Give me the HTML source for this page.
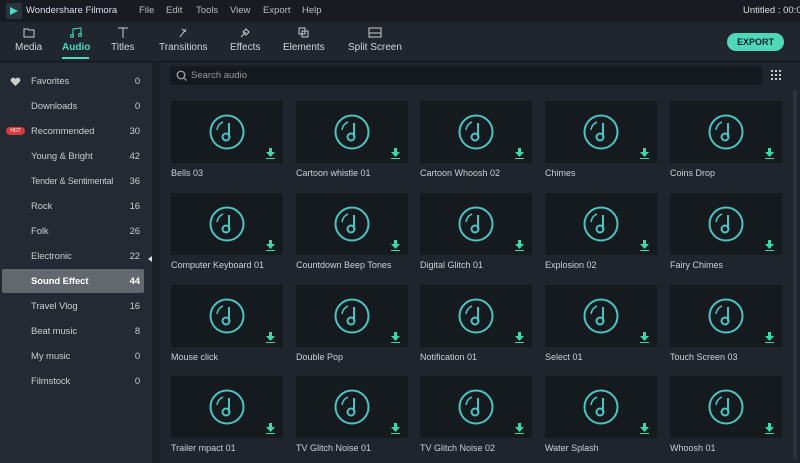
<html><head><style>
*{margin:0;padding:0;box-sizing:border-box}
body{width:800px;height:463px;overflow:hidden;background:#1c222b;font-family:"Liberation Sans",sans-serif;font-size:9.5px;color:#c8ccd0;position:relative}
.ab{position:absolute;white-space:nowrap}
#title{left:0;top:0;width:800px;height:22px;background:#181c22}
#tool{left:0;top:22px;width:800px;height:40px;background:#20262e;border-bottom:1px solid #14181d}
.tb{position:absolute;top:27px;text-align:center;font-size:10px;color:#d0d4d8;white-space:nowrap}
.tb svg{display:block;margin:0 auto 4px}
#side{left:0;top:63px;width:152px;height:400px;background:#232a33}
.it{position:absolute;left:0;width:152px;height:25px;line-height:25px;font-size:9.5px;letter-spacing:-0.1px}
.it .n{position:absolute;left:31px}
.it .c{position:absolute;right:12px}
#main{left:160px;top:63px;width:640px;height:400px;background:#1e252d}
.card{position:absolute;width:112px}
.th{width:112px;height:62px;background:#151a1f;position:relative}
.lb{margin-top:5px;font-size:9px;color:#ccd0d4;white-space:nowrap}
</style></head><body>
<div id="title" class="ab">
<svg class="ab" style="left:6px;top:3px" width="16" height="16"><rect width="16" height="16" rx="2" fill="#2a323c"/><path d="M4 4l8 4-8 4z" fill="#4fd8c0"/></svg>
<span class="ab" style="left:26px;top:5px;color:#dde">Wondershare Filmora</span>
<span class="ab" style="left:139px;top:5px;color:#bbb">File</span>
<span class="ab" style="left:166px;top:5px;color:#bbb">Edit</span>
<span class="ab" style="left:196px;top:5px;color:#bbb">Tools</span>
<span class="ab" style="left:230px;top:5px;color:#bbb">View</span>
<span class="ab" style="left:263px;top:5px;color:#bbb">Export</span>
<span class="ab" style="left:302px;top:5px;color:#bbb">Help</span>
<span class="ab" style="left:743px;top:5px;color:#ddd">Untitled : 00:0</span>
</div>
<div id="tool" class="ab"></div>
<div class="tb" style="left:15px"><svg width="12" height="11"><path d="M1 2h4l1 1h5v7H1z" fill="none" stroke="#ccc"/></svg>Media</div>
<div class="tb" style="left:62px;color:#4fd8c0;font-weight:bold"><svg width="14" height="11"><path d="M4 9V2l8-1v7" fill="none" stroke="#4fd8c0"/><circle cx="3" cy="9" r="1.5" fill="none" stroke="#4fd8c0"/><circle cx="11" cy="8" r="1.5" fill="none" stroke="#4fd8c0"/></svg>Audio</div>
<div class="ab" style="left:62px;top:57px;width:27px;height:2px;background:#4fd8c0"></div>
<div class="tb" style="left:111px"><svg width="12" height="11"><path d="M1 1h10M6 1v10" stroke="#ccc" fill="none"/></svg>Titles</div>
<div class="tb" style="left:159px"><svg width="12" height="11"><path d="M3 10l6-8M5 2l4 3" stroke="#ccc" fill="none"/></svg>Transitions</div>
<div class="tb" style="left:230px"><svg width="12" height="11"><path d="M2 10l5-5M7 2l3 3-3 3-3-3z" stroke="#ccc" fill="none"/></svg>Effects</div>
<div class="tb" style="left:283px"><svg width="12" height="11"><rect x="1" y="1" width="6" height="6" fill="none" stroke="#ccc"/><rect x="4" y="4" width="6" height="6" fill="none" stroke="#ccc"/></svg>Elements</div>
<div class="tb" style="left:348px"><svg width="14" height="11"><rect x="1" y="1" width="12" height="9" fill="none" stroke="#ccc"/><path d="M1 6h12" stroke="#ccc"/></svg>Split Screen</div>
<div class="ab" style="left:727px;top:33px;width:57px;height:18px;border-radius:9px;background:#4fd8b8;color:#123;font-weight:bold;font-size:9px;text-align:center;line-height:18px">EXPORT</div>
<div id="side" class="ab">
<div class="it" style="top:6px"><svg class="ab" style="left:10px;top:8px" width="11" height="10"><path d="M5.5 9L1 4.5A2.3 2.3 0 0 1 5.5 2 2.3 2.3 0 0 1 10 4.5z" fill="#ccc"/></svg><span class="n">Favorites</span><span class="c">0</span></div>
<div class="it" style="top:31px"><span class="n">Downloads</span><span class="c">0</span></div>
<div class="it" style="top:56px"><span class="ab" style="left:6px;top:8px;width:19px;height:8px;border-radius:4px;background:#d23c3c;font-size:5px;line-height:8px;text-align:center;color:#fff">HOT</span><span class="n">Recommended</span><span class="c">30</span></div>
<div class="it" style="top:81px"><span class="n">Young &amp; Bright</span><span class="c">42</span></div>
<div class="it" style="top:106px"><span class="n" style="font-size:9px;letter-spacing:-0.2px">Tender &amp; Sentimental</span><span class="c">36</span></div>
<div class="it" style="top:131px"><span class="n">Rock</span><span class="c">16</span></div>
<div class="it" style="top:156px"><span class="n">Folk</span><span class="c">26</span></div>
<div class="it" style="top:181px"><span class="n">Electronic</span><span class="c">22</span></div>
<div class="ab" style="left:2px;top:206px;width:142px;height:24px;border-radius:2px;background:#62686e"></div>
<div class="it" style="top:206px;color:#fff;font-weight:bold"><span class="n">Sound Effect</span><span class="c">44</span></div>
<div class="it" style="top:231px"><span class="n">Travel Vlog</span><span class="c">16</span></div>
<div class="it" style="top:256px"><span class="n">Beat music</span><span class="c">8</span></div>
<div class="it" style="top:281px"><span class="n">My music</span><span class="c">0</span></div>
<div class="it" style="top:306px"><span class="n">Filmstock</span><span class="c">0</span></div>
</div>
<div class="ab" style="left:152px;top:63px;width:8px;height:400px;background:#1a1f26"></div>
<div class="ab" style="left:148px;top:256px;width:0;height:0;border-top:3px solid transparent;border-bottom:3px solid transparent;border-right:4px solid #ddd"></div>
<div id="main" class="ab"></div>
<div class="ab" style="left:170px;top:66px;width:592px;height:19px;background:#151a20;border-radius:3px"></div>
<svg class="ab" style="left:176px;top:70px" width="11" height="11"><circle cx="5" cy="5" r="3.8" fill="none" stroke="#aaa" stroke-width="1.2"/><path d="M8 8l2.5 2.5" stroke="#aaa" stroke-width="1.2"/></svg>
<span class="ab" style="left:191px;top:70px;color:#999">Search audio</span>
<svg class="ab" style="left:771px;top:70px" width="10" height="10" fill="#ccc"><rect x="0" y="0" width="2" height="2"/><rect x="4" y="0" width="2" height="2"/><rect x="8" y="0" width="2" height="2"/><rect x="0" y="4" width="2" height="2"/><rect x="4" y="4" width="2" height="2"/><rect x="8" y="4" width="2" height="2"/><rect x="0" y="8" width="2" height="2"/><rect x="4" y="8" width="2" height="2"/><rect x="8" y="8" width="2" height="2"/></svg>
<div class="ab" style="left:793px;top:90px;width:4px;height:370px;background:#2b323a"></div>
<div id="cards"></div>
<script>
var names=["Bells 03","Cartoon whistle 01","Cartoon Whoosh 02","Chimes","Coins Drop","Computer Keyboard 01","Countdown Beep Tones","Digital Glitch 01","Explosion 02","Fairy Chimes","Mouse click","Double Pop","Notification 01","Select 01","Touch Screen 03","Trailer mpact 01","TV Glitch Noise 01","TV Glitch Noise 02","Water Splash","Whoosh 01"];
var xs=[171,296,420,545,670],ys=[101,193,285,376],h="";
names.forEach(function(n,i){var x=xs[i%5],y=ys[Math.floor(i/5)];
h+='<div class="card" style="left:'+x+'px;top:'+y+'px"><div class="th"><svg width="112" height="62"><circle cx="56" cy="31" r="16.5" fill="none" stroke="#4cc4c4" stroke-width="2"/><path d="M46 29a10 10 0 0 1 6-8" fill="none" stroke="#4cc4c4" stroke-width="1.5"/><path d="M58 22v14" stroke="#4cc4c4" stroke-width="2"/><circle cx="55" cy="36" r="3.5" fill="none" stroke="#4cc4c4" stroke-width="2"/><path d="M98 47h3v4h3l-4.5 5-4.5-5h3z" fill="#3fd7a8"/><rect x="95" y="57" width="9" height="1" fill="#3fd7a8"/></svg></div><div class="lb">'+n+'</div></div>';});
document.getElementById("cards").innerHTML=h;
</script>
</body></html>
